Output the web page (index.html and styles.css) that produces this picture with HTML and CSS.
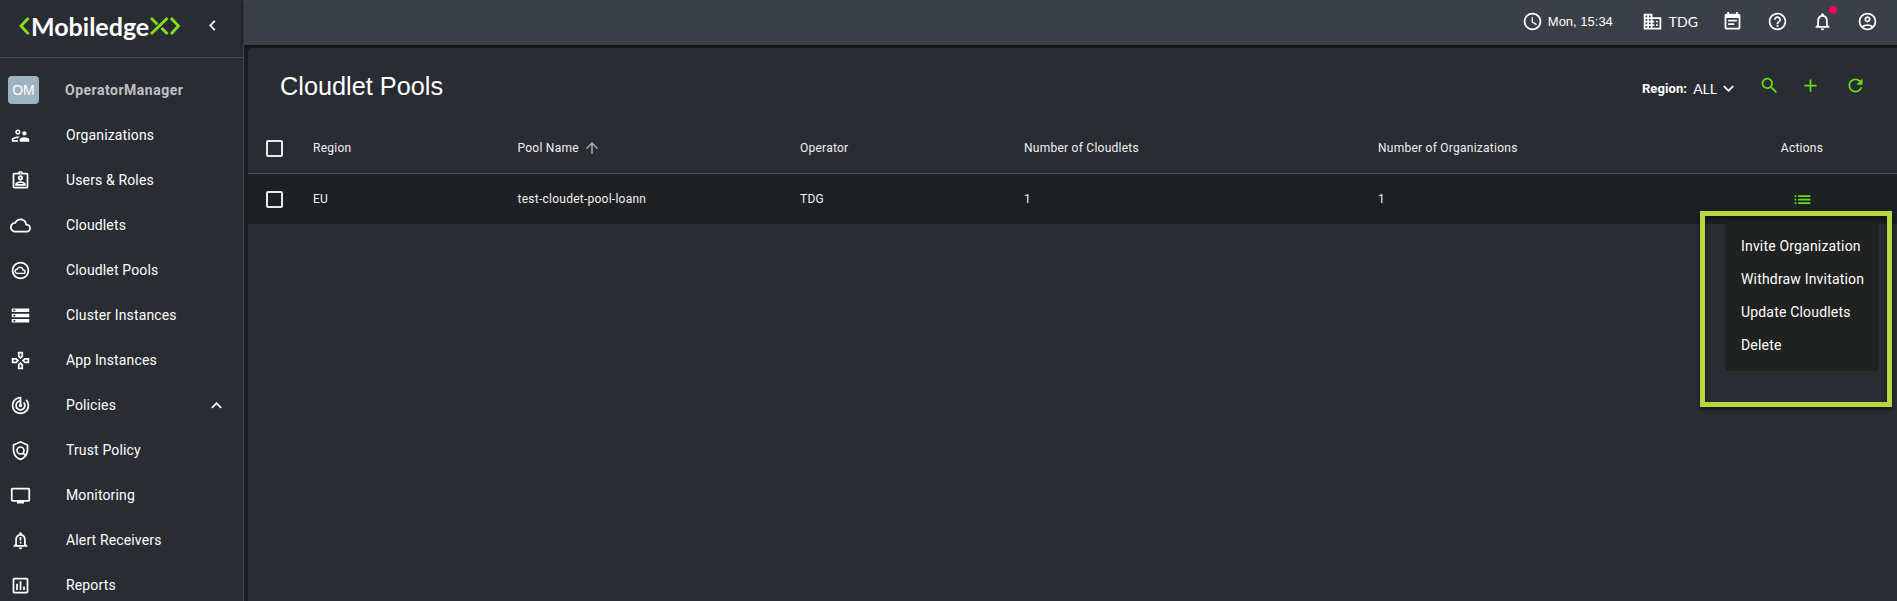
FILE: index.html
```html
<!DOCTYPE html>
<html lang="en">
<head>
<meta charset="utf-8">
<title>Cloudlet Pools</title>
<link rel="stylesheet" href="styles.css">
</head>
<body>
<div class="app">
  <aside class="sidebar">
    <div class="brand">
      <div class="logo">
        <svg class="logo-left" viewBox="0 0 11 18"><path d="M9.500 1 2 9l7.500 8"/></svg>
        <span class="logo-text">Mobiledge</span>
        <svg class="logo-right" viewBox="0 0 31 18"><path d="M1 1l6.500 6.500M11.500 11l6 6M17.500 1 1 17M21 1l7.500 8-7.500 8"/></svg>
      </div>
      <svg class="icon collapse" viewBox="0 0 24 24"><path d="M15.410 7.410 14 6l-6 6 6 6 1.410-1.410L10.830 12z"/></svg>
    </div>
    <nav class="nav">
      <div class="nav-item user"><span class="avatar">OM</span><span class="label">OperatorManager</span></div>
      <div class="nav-item"><svg class="icon" viewBox="0 0 24 24"><path d="M16.500 12c1.380 0 2.490-1.120 2.490-2.500S17.880 7 16.500 7C15.120 7 14 8.120 14 9.500s1.120 2.500 2.500 2.500zM9 11c1.660 0 2.990-1.340 2.990-3S10.660 5 9 5C7.340 5 6 6.340 6 8s1.340 3 3 3zm7.500 3c-1.830 0-5.500.92-5.500 2.750V19h11v-2.250c0-1.830-3.670-2.750-5.500-2.750zM9 13c-2.330 0-7 1.170-7 3.500V19h7v-2.250c0-.85.33-2.340 2.370-3.470C10.500 13.100 9.660 13 9 13z"/><circle class="hole" cx="9" cy="8" r="1.200"/><path class="hole" d="M9 17H4v-.5c0-.7 2.400-1.500 5-1.500z"/></svg><span class="label">Organizations</span></div>
      <div class="nav-item"><svg class="icon" viewBox="0 0 24 24"><path d="M19 3h-4.180C14.400 1.840 13.300 1 12 1s-2.400.84-2.820 2H5c-1.100 0-2 .9-2 2v14c0 1.100.9 2 2 2h14c1.100 0 2-.9 2-2V5c0-1.100-.9-2-2-2zm-7-.25c.41 0 .75.34.75.75s-.34.75-.75.75-.75-.34-.75-.75.340-.75.750-.75zM19 19H5V5h14v14zM12 6c-1.650 0-3 1.350-3 3s1.350 3 3 3 3-1.350 3-3-1.350-3-3-3zm0 4c-.55 0-1-.45-1-1s.45-1 1-1 1 .45 1 1-.45 1-1 1zm-6 6.470V18h12v-1.530c0-2.500-3.970-3.580-6-3.580s-6 1.070-6 3.580zM8.310 16c.69-.56 2.380-1.120 3.690-1.120s3.010.560 3.690 1.120H8.310z"/></svg><span class="label">Users &amp; Roles</span></div>
      <div class="nav-item"><svg class="icon" viewBox="0 0 24 24"><path d="M19.350 10.040C18.670 6.590 15.640 4 12 4 9.110 4 6.600 5.640 5.350 8.040 2.340 8.360 0 10.910 0 14c0 3.310 2.690 6 6 6h13c2.760 0 5-2.240 5-5 0-2.640-2.050-4.780-4.650-4.960zM19 18H6c-2.210 0-4-1.790-4-4 0-2.050 1.530-3.760 3.560-3.970l1.070-.11.5-.95C8.080 7.140 9.940 6 12 6c2.620 0 4.880 1.860 5.390 4.430l.3 1.500 1.530.110c1.560.1 2.780 1.410 2.780 2.960 0 1.650-1.350 3-3 3z"/></svg><span class="label">Cloudlets</span></div>
      <div class="nav-item"><svg class="icon" viewBox="0 0 24 24"><path d="M12 2C6.480 2 2 6.480 2 12s4.480 10 10 10 10-4.480 10-10S17.520 2 12 2zm0 18c-4.410 0-8-3.590-8-8s3.590-8 8-8 8 3.590 8 8-3.590 8-8 8zm3.560-9.340C15.040 8.790 13.490 7.500 11.500 7.500c-1.630 0-3.060.930-3.780 2.280C6.140 9.960 5 11.300 5 12.950 5 14.700 6.430 16.100 8.180 16.100h7.070c1.520 0 2.750-1.240 2.750-2.750 0-1.380-1.060-2.540-2.440-2.690zM15.200 14.500H8.300c-.9 0-1.650-.7-1.650-1.600 0-.9.750-1.600 1.650-1.600h.5c.2-1.300 1.250-2.200 2.650-2.200 1.500 0 2.700 1.200 2.700 2.700v.4h1.050c.65 0 1.150.5 1.150 1.150s-.5 1.150-1.150 1.150z"/></svg><span class="label">Cloudlet Pools</span></div>
      <div class="nav-item"><svg class="icon" viewBox="0 0 24 24"><path d="M2 20h20v-4H2v4zm2-3h2v2H4v-2zM2 4v4h20V4H2zm4 3H4V5h2v2zm-4 7h20v-4H2v4zm2-3h2v2H4v-2z"/></svg><span class="label">Cluster Instances</span></div>
      <div class="nav-item"><svg class="icon" viewBox="0 0 24 24"><path d="M13 4v2.670l-1 1-1-1V4h2m7 7v2h-2.670l-1-1 1-1H20M6.670 11l1 1-1 1H4v-2h2.670M12 16.330l1 1V20h-2v-2.670l1-1M15 2H9v5.500l3 3 3-3V2zm7 7h-5.500l-3 3 3 3H22V9zM7.500 9H2v6h5.500l3-3-3-3zm4.500 4.500l-3 3V22h6v-5.500l-3-3z"/></svg><span class="label">App Instances</span></div>
      <div class="nav-item"><svg class="icon" viewBox="0 0 24 24"><path d="M19.070 4.930l-1.410 1.410C19.100 7.790 20 9.790 20 12c0 4.420-3.580 8-8 8s-8-3.580-8-8c0-4.080 3.050-7.440 7-7.930v2.020C8.160 6.570 6 9.030 6 12c0 3.310 2.690 6 6 6s6-2.690 6-6c0-1.660-.67-3.160-1.760-4.240l-1.410 1.410C15.550 9.900 16 10.900 16 12c0 2.210-1.790 4-4 4s-4-1.790-4-4c0-1.860 1.280-3.410 3-3.860v2.140c-.6.350-1 .980-1 1.720 0 1.100.9 2 2 2s2-.9 2-2c0-.74-.4-1.380-1-1.720V2h-1C6.480 2 2 6.480 2 12s4.480 10 10 10 10-4.480 10-10c0-2.760-1.120-5.260-2.930-7.070z"/></svg><span class="label">Policies</span><svg class="icon chevron" viewBox="0 0 24 24"><path d="M7.410 15.410 12 10.830l4.590 4.580L18 14l-6-6-6 6z"/></svg></div>
      <div class="nav-item"><svg class="icon" viewBox="0 0 24 24"><path d="M12 1 3 5v6c0 5.550 3.840 10.740 9 12 5.160-1.260 9-6.450 9-12V5l-9-4zm7 10c0 4.520-2.980 8.690-7 9.930-4.020-1.240-7-5.410-7-9.930V6.300l7-3.110 7 3.110V11z"/><path class="line" d="M16 12a4 4 0 1 1-8 0 4 4 0 0 1 8 0zM14.800 14.800l3 3"/></svg><span class="label">Trust Policy</span></div>
      <div class="nav-item"><svg class="icon" viewBox="0 0 24 24"><path d="M21 3H3c-1.100 0-2 .9-2 2v12c0 1.100.9 2 2 2h5v2h8v-2h5c1.100 0 1.990-.9 1.990-2L23 5c0-1.100-.9-2-2-2zm0 14H3V5h18v12z"/></svg><span class="label">Monitoring</span></div>
      <div class="nav-item"><svg class="icon" viewBox="0 0 24 24"><path d="M12 22c1.100 0 2-.9 2-2h-4c0 1.100.9 2 2 2zm6-6v-5c0-3.070-1.630-5.640-4.500-6.320V4c0-.83-.67-1.500-1.500-1.500s-1.500.67-1.500 1.500v.68C7.640 5.360 6 7.920 6 11v5l-2 2v1h16v-1l-2-2zm-2 1H8v-6c0-2.480 1.510-4.500 4-4.500s4 2.020 4 4.500v6zM11 8h2v4h-2zm0 5.500h2v2h-2z"/></svg><span class="label">Alert Receivers</span></div>
      <div class="nav-item"><svg class="icon" viewBox="0 0 24 24"><path d="M9 17H7v-7h2v7zm4 0h-2V7h2v10zm4 0h-2v-4h2v4zm2 2H5V5h14v14zm0-16H5c-1.100 0-2 .9-2 2v14c0 1.100.9 2 2 2h14c1.100 0 2-.9 2-2V5c0-1.100-.9-2-2-2z"/></svg><span class="label">Reports</span></div>
    </nav>
  </aside>

  <div class="main">
    <header class="topbar">
      <div class="clock"><svg class="icon" viewBox="0 0 24 24"><path d="M11.990 2C6.470 2 2 6.480 2 12s4.470 10 9.990 10C17.520 22 22 17.520 22 12S17.520 2 11.990 2zM12 20c-4.420 0-8-3.580-8-8s3.580-8 8-8 8 3.580 8 8-3.580 8-8 8zm.5-13H11v6l5.250 3.150.75-1.230-4.500-2.670z"/></svg><span>Mon, 15:34</span></div>
      <div class="org"><svg class="icon" viewBox="0 0 24 24"><path d="M12 7V3H2v18h20V7H12zM6 19H4v-2h2v2zm0-4H4v-2h2v2zm0-4H4V9h2v2zm0-4H4V5h2v2zm4 12H8v-2h2v2zm0-4H8v-2h2v2zm0-4H8V9h2v2zm0-4H8V5h2v2zm10 12h-8v-2h2v-2h-2v-2h2v-2h-2V9h8v10zm-2-8h-2v2h2v-2zm0 4h-2v2h2v-2z"/></svg><span>TDG</span></div>
      <div class="tools">
        <svg class="icon" viewBox="0 0 24 24"><path d="M17 10H7v2h10v-2zm2-7h-1V1h-2v2H8V1H6v2H5c-1.110 0-1.990.9-1.990 2L3 19c0 1.100.890 2 2 2h14c1.100 0 2-.9 2-2V5c0-1.100-.9-2-2-2zm0 16H5V8h14v11zm-5-5H7v2h7v-2z"/></svg>
        <svg class="icon" viewBox="0 0 24 24"><path d="M11 18h2v-2h-2v2zm1-16C6.480 2 2 6.480 2 12s4.480 10 10 10 10-4.480 10-10S17.520 2 12 2zm0 18c-4.410 0-8-3.590-8-8s3.590-8 8-8 8 3.590 8 8-3.590 8-8 8zm0-14c-2.210 0-4 1.790-4 4h2c0-1.100.9-2 2-2s2 .9 2 2c0 2-3 1.750-3 5h2c0-2.250 3-2.500 3-5 0-2.210-1.790-4-4-4z"/></svg>
        <span class="bell"><svg class="icon" viewBox="0 0 24 24"><path d="M12 22c1.100 0 2-.9 2-2h-4c0 1.100.9 2 2 2zm6-6v-5c0-3.070-1.630-5.640-4.500-6.320V4c0-.83-.67-1.500-1.500-1.500s-1.500.67-1.500 1.500v.68C7.640 5.360 6 7.920 6 11v5l-2 2v1h16v-1l-2-2zm-2 1H8v-6c0-2.480 1.510-4.500 4-4.500s4 2.020 4 4.500v6z"/></svg><i class="dot"></i></span>
        <svg class="icon" viewBox="0 0 24 24"><path fill-rule="evenodd" d="M12 2C6.480 2 2 6.480 2 12s4.480 10 10 10 10-4.480 10-10S17.520 2 12 2zM7.350 18.500C8.660 17.560 10.260 17 12 17s3.340.560 4.650 1.500C15.340 19.440 13.740 20 12 20s-3.340-.56-4.650-1.500zm10.790-1.380C16.450 15.800 14.320 15 12 15s-4.450.8-6.140 2.120C4.700 15.730 4 13.950 4 12c0-4.420 3.580-8 8-8s8 3.580 8 8c0 1.950-.7 3.730-1.860 5.120zM12 6c-1.930 0-3.500 1.570-3.500 3.500S10.070 13 12 13s3.500-1.570 3.500-3.500S13.930 6 12 6zm0 5c-.83 0-1.500-.67-1.500-1.500S11.170 8 12 8s1.500.67 1.500 1.500S12.830 11 12 11z"/></svg>
      </div>
    </header>

    <section class="panel">
      <div class="panel-head">
        <h1>Cloudlet Pools</h1>
        <div class="region"><b>Region:</b><span>ALL</span><svg class="icon" viewBox="0 0 24 24"><path d="M7.410 8.590 12 13.170l4.590-4.580L18 10l-6 6-6-6z"/></svg></div>
        <div class="actions">
          <svg class="icon" viewBox="0 0 24 24"><path d="M15.500 14h-.79l-.28-.27C15.410 12.590 16 11.110 16 9.500 16 5.910 13.090 3 9.500 3S3 5.910 3 9.500 5.910 16 9.500 16c1.610 0 3.090-.59 4.230-1.570l.27.28v.79l5 4.990L20.490 19l-4.990-5zm-6 0C7.010 14 5 11.990 5 9.500S7.010 5 9.500 5 14 7.010 14 9.500 11.990 14 9.500 14z"/></svg>
          <svg class="icon" viewBox="0 0 24 24"><path d="M19 13h-6v6h-2v-6H5v-2h6V5h2v6h6z"/></svg>
          <svg class="icon refresh" viewBox="0 0 24 24"><path d="M17.650 6.350C16.200 4.900 14.210 4 12 4c-4.420 0-7.990 3.580-7.990 8s3.570 8 7.990 8c3.730 0 6.840-2.550 7.730-6h-2.080c-.82 2.330-3.040 4-5.650 4-3.310 0-6-2.690-6-6s2.690-6 6-6c1.660 0 3.140.69 4.220 1.780L13 11h7V4l-2.350 2.350z"/></svg>
        </div>
      </div>
      <div class="row head">
        <span class="check"><i class="box"></i></span>
        <span>Region</span>
        <span class="sorted">Pool Name<svg class="icon" viewBox="0 0 24 24"><path d="m4 12 1.410 1.410L11 7.830V20h2V7.830l5.580 5.590L20 12l-8-8z"/></svg></span>
        <span>Operator</span><span>Number of Cloudlets</span><span>Number of Organizations</span><span class="last">Actions</span>
      </div>
      <div class="row data">
        <span class="check"><i class="box"></i></span>
        <span>EU</span><span>test-cloudet-pool-loann</span><span>TDG</span><span>1</span><span>1</span>
        <span class="last"><svg class="icon list" viewBox="0 0 24 24"><path d="M3 13h2v-2H3v2zm0 4h2v-2H3v2zm0-8h2V7H3v2zm4 4h14v-2H7v2zm0 4h14v-2H7v2zM7 7v2h14V7H7z"/></svg></span>
      </div>
    </section>
  </div>

  <div class="highlight">
    <div class="menu"><div>Invite Organization</div><div>Withdraw Invitation</div><div>Update Cloudlets</div><div>Delete</div></div>
  </div>
</div>
</body>
</html>
```
FILE: styles.css
```css
* { box-sizing: border-box; }
body { margin: 0; background: #1a1b20; color: #fff; font-family: Roboto, "Liberation Sans", sans-serif; overflow: hidden; }
.app { position: relative; display: flex; height: 601px; overflow: hidden; }
.icon { display: block; flex: none; width: 21px; height: 21px; fill: currentColor; }
.hole { fill: #292c33; }
.line { fill: none; stroke: currentColor; stroke-width: 1.900; }

.sidebar { flex: none; width: 244px; height: 601px; overflow: hidden; background: #292c33; border-right: 1px solid #484a50; }
.brand { display: flex; align-items: center; height: 58px; padding: 0 20px 6px 19px; border-bottom: 1px solid #47494e; }
.logo { display: flex; align-items: center; width: 162px; }
.logo svg { flex: none; fill: none; stroke: #84e01c; stroke-width: 2.800; height: 18px; }
.logo-left { width: 11px; }
.logo-right { width: 31px; margin-left: auto; }
.logo-text { font: 700 25px/30px Lato, sans-serif; letter-spacing: 0; margin-left: 1px; }
.collapse { margin-left: 21px; }

.nav { padding-top: 10px; }
.nav-item { display: flex; align-items: center; height: 45px; padding-left: 10px; font-size: 14px; letter-spacing: 0.140px; }
.nav-item .label { margin-left: 35px; padding-bottom: 1px; }
.nav-item .chevron { margin-left: auto; margin-right: 16px; }
.nav-item.user { padding: 0 0 1px 8px; letter-spacing: 0.500px; }
.avatar { display: flex; align-items: center; justify-content: center; width: 31px; height: 28px; border-radius: 4px; background: #9eb3c2; font: 14px "Liberation Sans", sans-serif; letter-spacing: 0; }
.nav-item.user .label { margin-left: 26px; color: #c0c1c3; font-weight: 700; }

.main { flex: 1; display: flex; flex-direction: column; min-width: 0; }
.topbar { display: flex; align-items: center; justify-content: flex-end; height: 45px; padding: 0 19px 3px 0; background: #3b3f47; box-shadow: 0 1px 4px #0c0d10; font-family: "Liberation Sans", sans-serif; }
.clock, .org { display: flex; align-items: center; font-size: 13px; }
.clock span { margin-left: 5px; }
.org { margin-left: 29px; }
.org span { margin-left: 6px; font: 14px Lato, sans-serif; }
.tools { display: flex; margin-left: 24px; gap: 24px; }
.bell { position: relative; }
.dot { position: absolute; left: 17px; top: -5px; width: 8px; height: 8px; border-radius: 50%; background: #f50057; }

.panel { flex: 1; margin: 3px 0 0 4px; background: #292c33; border-radius: 4px 0 0; }
.panel-head { display: flex; align-items: center; height: 75px; padding: 0 31px 0 32px; }
h1 { margin: 0 auto 0 0; font: 400 25.300px/30px "Liberation Sans", sans-serif; }
.region { display: flex; align-items: center; font-size: 14px; padding-top: 5px; }
.region b { font-size: 13px; letter-spacing: 0.100px; }
.region span { margin-left: 6px; font-family: Lato, sans-serif; }
.region .icon { margin-left: 1px; }
.actions { display: flex; margin-left: 20px; gap: 20px; color: #65dc1a; }
.refresh { margin-left: 4px; }

.row { display: grid; grid-template-columns: 65px 204.500px 282.500px 224px 354px 1fr 190px; align-items: center; font-size: 12px; letter-spacing: 0.250px; color: #f0f0f1; }
.head { height: 51px; border-bottom: 1px solid #505357; }
.data { height: 50px; background: #1e2123; }
.check { padding-left: 18px; }
.box { display: block; width: 17px; height: 17px; border: 2px solid #e8e8e9; border-radius: 2px; }
.sorted { display: flex; align-items: center; }
.sorted .icon { width: 18px; height: 18px; margin-left: 4px; color: #a9abad; }
.last { display: flex; justify-content: center; }
.list { color: #65dc1a; }

.highlight { position: absolute; left: 1700px; top: 211px; width: 192px; height: 196px; border: 5px solid #b4d83f; box-shadow: 0 2px 4px #111, inset 0 3px 4px #111; padding: 7px 8px 0 20px; }
.menu { height: 148px; padding: 7px 0 0 16px; background: #202121; border-radius: 0 0 4px 4px; font-size: 14px; letter-spacing: 0.180px; white-space: nowrap; }
.menu div { height: 33px; line-height: 33px; }
```
